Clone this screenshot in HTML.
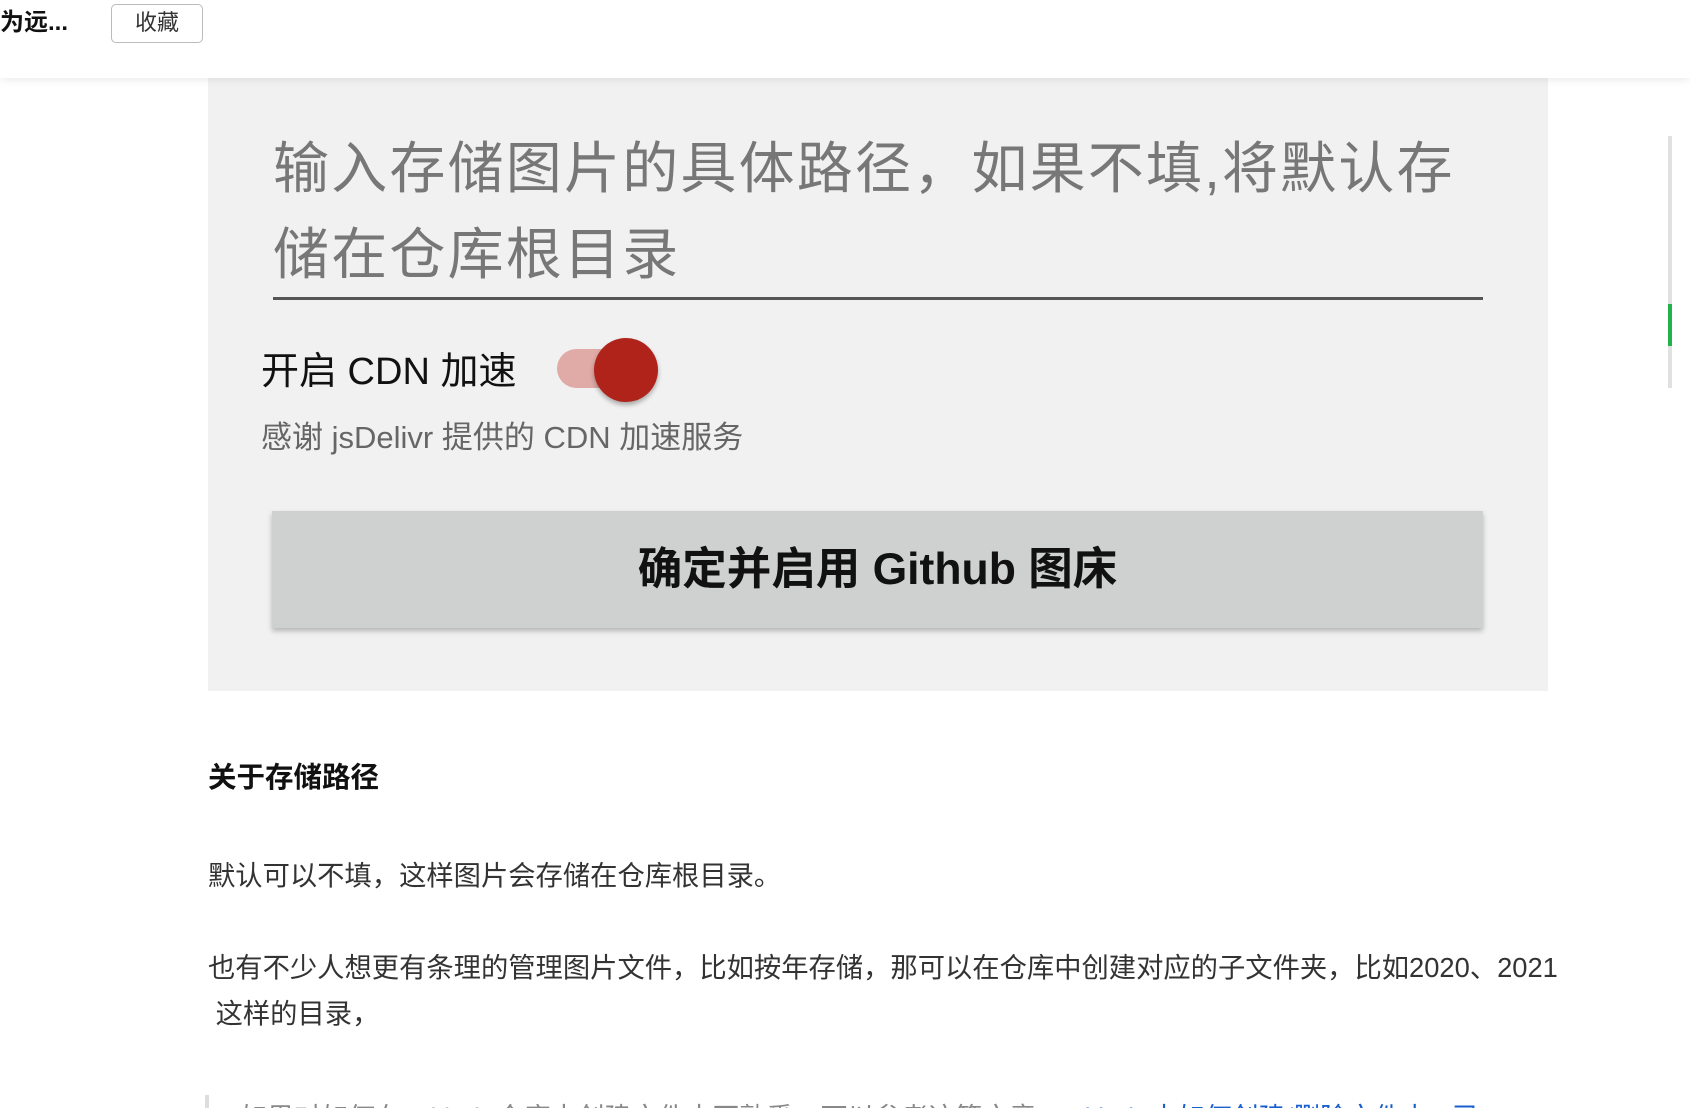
<!DOCTYPE html>
<html><head><meta charset="utf-8"><style>
*{margin:0;padding:0;box-sizing:border-box}
html,body{width:1690px;height:1108px;overflow:hidden}
body{background:#fff;position:relative;font-family:"Liberation Sans","Noto Sans CJK SC",sans-serif;color:#222}
.hdr{position:absolute;left:0;top:0;width:1690px;height:78px;background:#fff;box-shadow:0 2px 8px rgba(0,0,0,.08);z-index:2}
.t{position:absolute;left:0;top:7px;font-size:24px;font-weight:bold;line-height:32px;color:#111}
.btn{position:absolute;left:111px;top:4px;width:92px;height:39px;border:1.5px solid #bbb;border-radius:5px;font-size:22px;line-height:36px;text-align:center;color:#333}
.panel{position:absolute;left:208px;top:78px;width:1340px;height:613px;background:#f1f1f1}
.ph{position:absolute;left:273px;top:126px;width:1215px;font-size:56px;line-height:86px;color:#777;letter-spacing:2.2px}
.ul{position:absolute;left:273px;top:297px;width:1210px;height:3px;background:#555}
.lab{position:absolute;left:261px;top:350px;font-size:38px;line-height:44px;color:#111}
.track{position:absolute;left:557px;top:349px;width:72px;height:39px;border-radius:20px;background:#e0aaa6}
.knob{position:absolute;left:594px;top:338px;width:64px;height:64px;border-radius:50%;background:#b0231b;box-shadow:0 3px 5px rgba(0,0,0,.3)}
.sub{position:absolute;left:261px;top:418px;font-size:31px;line-height:40px;color:#666}
.cb{position:absolute;left:272px;top:511px;width:1211px;height:117px;background:#cfd1d1;box-shadow:0 3px 5px rgba(0,0,0,.25);text-align:center;font-size:44.5px;font-weight:bold;line-height:117px;color:#111}
.h{position:absolute;left:208px;top:760px;font-size:28.5px;font-weight:bold;line-height:36px;color:#111}
.p{position:absolute;left:208px;font-size:27.3px;line-height:46px;color:#333}
.bq{position:absolute;left:205px;top:1095px;width:4px;height:20px;background:#ddd}
.bqt{position:absolute;left:240px;top:1100px;font-size:27px;line-height:36px;color:#888;white-space:nowrap}
.sb{position:absolute;left:1668px;top:136px;width:4px;height:252px;background:#e1e1e1}
.sg{position:absolute;left:1668px;top:304px;width:4px;height:42px;background:#22b14c}
</style></head><body>
<div class="hdr"><div class="t">为远...</div><div class="btn">收藏</div></div>
<div class="panel"></div>
<div class="ph">输入存储图片的具体路径，如果不填,将默认存储在仓库根目录</div>
<div class="ul"></div>
<div class="lab">开启 CDN 加速</div>
<div class="track"></div><div class="knob"></div>
<div class="sub">感谢 jsDelivr 提供的 CDN 加速服务</div>
<div class="cb">确定并启用 Github 图床</div>
<div class="h">关于存储路径</div>
<div class="p" style="top:853px">默认可以不填，这样图片会存储在仓库根目录。</div>
<div class="p" style="top:945px;width:1380px">也有不少人想更有条理的管理图片文件，比如按年存储，那可以在仓库中创建对应的子文件夹，比如2020、2021<br>&nbsp;这样的目录，</div>
<div class="bq"></div>
<div class="bqt">如果对如何在 Github 仓库中创建文件夹不熟悉，可以参考这篇文章：<span style="color:#1a5fd0">Github 中如何创建/删除文件夹 - 已</span></div>
<div class="sb"></div><div class="sg"></div>
</body></html>
